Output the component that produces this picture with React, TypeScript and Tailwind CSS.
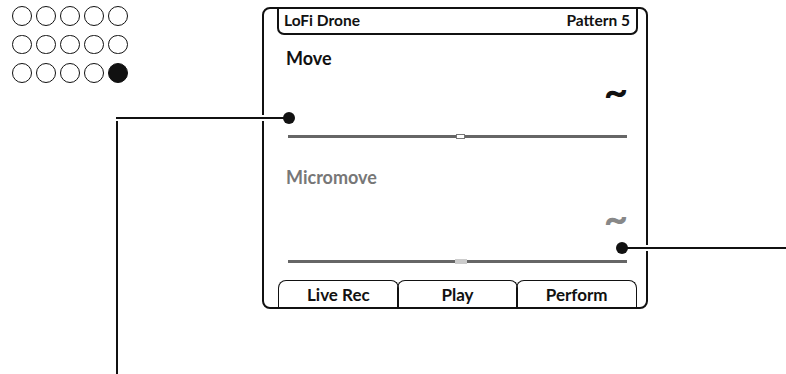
const FONT = { fontFamily: "Lato, 'Open Sans', sans-serif" } as const;

function Dots() {
  const cells = Array.from({ length: 15 }, (_, i) => i);
  return (
    <div className="grid grid-cols-5 gap-x-[4px] gap-y-[9px] w-[116px]">
      {cells.map((i) => (
        <div
          key={i}
          className={
            i === 14
              ? "w-[19.5px] h-[19.5px] rounded-full bg-[#111] border-[1.5px] border-[#111]"
              : "w-[19.5px] h-[19.5px] rounded-full border-[1.5px] border-[#111]"
          }
        />
      ))}
    </div>
  );
}

function Slider({ thumb }: { thumb: "white" | "gray" }) {
  return (
    <div className="relative h-[3px] bg-[#666]">
      {thumb === "white" ? (
        <div className="absolute left-[168px] top-[-1px] w-[9px] h-[5px] bg-white border border-[#777]" />
      ) : (
        <div className="absolute left-[167px] top-[-1px] w-[12px] h-[5px] bg-[#ccc]" />
      )}
    </div>
  );
}

function Param({ label, dim }: { label: string; dim?: boolean }) {
  return (
    <div className="flex flex-col pl-[22px] pr-[19px]">
      <p
        className={
          dim
            ? "text-[18px] leading-[20px] font-bold text-[#777]"
            : "text-[18px] leading-[20px] font-bold text-[#111]"
        }
      >
        {label}
      </p>
      <div className="flex justify-end h-[38px] items-center">
        <span
          className={
            dim
              ? "text-[42px] leading-none font-bold text-[#888] mr-[-1px] mt-[22px]"
              : "text-[42px] leading-none font-bold text-[#111] mr-[-1px] mt-[6px]"
          }
        >
          ~
        </span>
      </div>
      <div className={dim ? "h-[38px] flex flex-col justify-end pl-[2px]" : "h-[32px] flex flex-col justify-end pl-[2px]"}>
        <Slider thumb={dim ? "gray" : "white"} />
      </div>
    </div>
  );
}

function Tab({ label }: { label: string }) {
  return (
    <div className="flex-1 h-[27px] flex items-center justify-center border-[1.5px] border-b-0 border-[#111] rounded-t-[8px] -ml-[1.5px] first:ml-0">
      <span className="text-[17px] font-bold text-[#111] leading-none">{label}</span>
    </div>
  );
}

function Screen() {
  return (
    <div className="w-[386px] h-[302px] border-2 border-[#111] rounded-[8px] flex flex-col">
      <div className="ml-[13px] w-[361px] h-[26px] border-2 border-t-0 border-[#111] rounded-b-[7px] flex items-center justify-between pl-[5px] pr-[6px]">
        <span className="text-[15.5px] font-bold text-[#111] leading-none">LoFi Drone</span>
        <span className="text-[15.5px] font-bold text-[#111] leading-none">Pattern 5</span>
      </div>
      <div className="mt-[13px]">
        <Param label="Move" />
      </div>
      <div className="mt-[29px]">
        <Param label="Micromove" dim />
      </div>
      <div className="mt-auto ml-[14px] mr-[9px] flex">
        <Tab label="Live Rec" />
        <Tab label="Play" />
        <Tab label="Perform" />
      </div>
    </div>
  );
}

export default function App() {
  return (
    <div className="relative w-[786px] h-[374px] bg-white overflow-hidden" style={FONT}>
      <div className="flex items-start pt-[6px] pl-[12px]">
        <Dots />
        <div className="ml-[134px] mt-[1px]">
          <Screen />
        </div>
      </div>

      {/* callout: Move */}
      <div className="absolute left-[116px] top-[117px] w-[2px] h-[260px] bg-[#111] shadow-[0_0_0_2px_#fff]" />
      <div className="absolute left-[116px] top-[117px] w-[172px] h-[2px] bg-[#111] shadow-[0_0_0_2px_#fff]" />
      <div className="absolute left-[283px] top-[112px] w-[12px] h-[12px] rounded-full bg-[#111]" />

      {/* callout: Micromove */}
      <div className="absolute left-[622px] top-[247px] w-[170px] h-[2px] bg-[#111] shadow-[0_0_0_2px_#fff]" />
      <div className="absolute left-[616px] top-[242px] w-[12px] h-[12px] rounded-full bg-[#111]" />
    </div>
  );
}
